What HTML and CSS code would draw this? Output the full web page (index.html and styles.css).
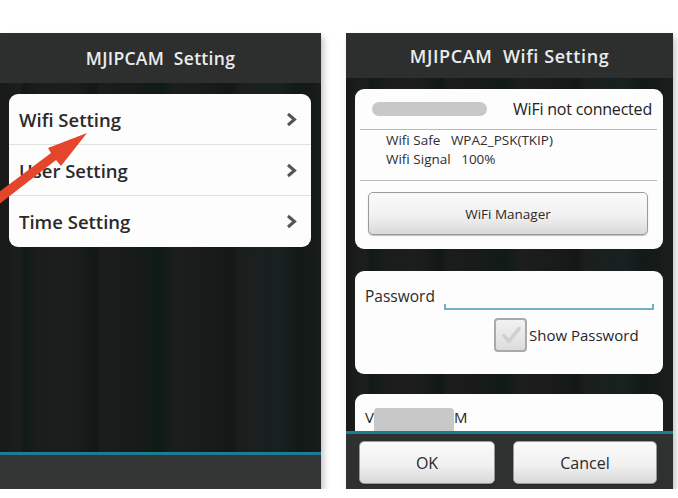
FILE: index.html
```html
<!DOCTYPE html>
<html lang="en">
<head>
    <meta charset="UTF-8">
    <title>MJIPCAM Setting</title>
    <link rel="stylesheet" href="styles.css">
</head>
<body>
    <div class="phone phone-left">
        <div class="titlebar">MJIPCAM&nbsp; Setting</div>
        <div class="screen">
            <ul class="menu">
                <li class="menu-item"><span>Wifi Setting</span>
                    <svg class="chev" width="11" height="15" viewBox="0 0 11 15"><path d="M2 2 L8.5 7.5 L2 13" fill="none" stroke="#555" stroke-width="3"/></svg>
                </li>
                <li class="menu-item"><span>User Setting</span>
                    <svg class="chev" width="11" height="15" viewBox="0 0 11 15"><path d="M2 2 L8.5 7.5 L2 13" fill="none" stroke="#555" stroke-width="3"/></svg>
                </li>
                <li class="menu-item"><span>Time Setting</span>
                    <svg class="chev" width="11" height="15" viewBox="0 0 11 15"><path d="M2 2 L8.5 7.5 L2 13" fill="none" stroke="#555" stroke-width="3"/></svg>
                </li>
            </ul>
        </div>
        <div class="navbar"></div>
        <!-- red pointer drawn over the menu -->
        <svg class="pointer" width="120" height="230" viewBox="0 0 120 230">
            <polygon points="87,133 61,166 56,160 -7,209 -13,201 51,153 48,148" fill="#e4452b"/>
        </svg>
    </div>

    <div class="phone phone-right">
        <div class="titlebar titlebar-sm">MJIPCAM&nbsp; Wifi Setting</div>
        <div class="screen screen-sm">
            <div class="card card-wifi">
                <div class="wifi-row">
                    <span class="blur blur-ssid"></span>
                    <span class="wifi-state">WiFi not connected</span>
                </div>
                <div class="divider"></div>
                <div class="wifi-info">
                    <p>Wifi Safe&nbsp;&nbsp; WPA2_PSK(TKIP)</p>
                    <p>Wifi Signal&nbsp;&nbsp; 100%</p>
                </div>
                <div class="divider"></div>
                <div class="btn-wrap">
                    <div class="btn">WiFi Manager</div>
                </div>
            </div>

            <div class="card card-pass">
                <div class="pass-row">
                    <span class="label">Password</span>
                    <span class="input"></span>
                </div>
                <div class="check-row">
                    <span class="checkbox">
                        <svg width="33" height="33" viewBox="0 0 33 33">
                            <path d="M8 17 L14 24 L26 9" fill="none" stroke="#d0d0d0" stroke-width="4" stroke-linecap="round" stroke-linejoin="round"/>
                        </svg>
                    </span>
                    <span class="check-text">Show Password</span>
                </div>
            </div>

            <div class="card card-name">
                <span>V</span><span class="blur blur-name"></span><span>M</span>
            </div>
        </div>
        <div class="footer">
            <div class="btn btn-ok">OK</div>
            <div class="btn btn-cancel">Cancel</div>
        </div>
    </div>
</body>
</html>
```

FILE: styles.css
```css
*{
    margin: 0;
    padding: 0;
    list-style: none;
    box-sizing: border-box;
}
body{
    background-color: #fff;
    display: flex;
    align-items: flex-start;
    gap: 25px;
    padding-top: 33px;
    font-family: "Open Sans", "Noto Sans", "DejaVu Sans", sans-serif;
    color: #262626;
}
.phone{
    position: relative;
    display: flex;
    flex-direction: column;
    height: 456px;
    background-color: #1b1d1d;
    box-shadow: 3px 4px 6px rgba(0,0,0,0.22);
}
.phone-left{
    width: 321px;
}
.phone-right{
    width: 327px;
}
.titlebar{
    height: 50px;
    background-color: #2d2f2f;
    color: #ececec;
    font-size: 17.5px;
    font-weight: 600;
    display: flex;
    align-items: center;
    justify-content: center;
    letter-spacing: 0.3px;
}
.titlebar-sm{
    height: 45px;
    font-size: 18px;
    letter-spacing: 0.6px;
}
.screen{
    flex: 1;
    overflow: hidden;
    padding: 11px 10px 0 9px;
    background-color: #1a1c1c;
    background-image: linear-gradient(90deg,
        #181a1a 0, #1c1e1e 20px, #111a16 24px, #1b1d1d 40px,
        #1c1e1e 70px, #121816 96px, #1b1d1d 100px, #191b1b 130px,
        #0f1b16 160px, #1c1e1e 175px, #1a1c1c 200px, #131816 232px,
        #1c1e1e 240px, #172120 280px, #121917 300px, #1c1e1e 330px);
}
.navbar{
    height: 37px;
    border-top: 3px solid #1b7d91;
    background-color: #343636;
}

/* left menu */
.menu{
    background-color: #fdfdfd;
    border-radius: 9px;
    overflow: hidden;
}
.menu-item{
    height: 51px;
    display: flex;
    align-items: center;
    justify-content: space-between;
    padding: 0 14px 0 10px;
    font-size: 18.5px;
    font-weight: 600;
    color: #2a2a2a;
    border-bottom: 1px solid #e0e0e0;
}
.menu-item:last-child{
    border-bottom: none;
}
.pointer{
    position: absolute;
    left: 0;
    top: -33px;
}

/* right screen */
.card{
    background-color: #fdfdfd;
    border-radius: 9px;
}
.card-wifi{
    height: 160px;
}
.wifi-row{
    height: 40px;
    display: flex;
    align-items: center;
    justify-content: space-between;
    padding: 0 11px 0 17px;
}
.blur{
    display: inline-block;
    background-color: #c8c8c8;
    border-radius: 7px;
}
.blur-ssid{
    width: 115px;
    height: 14px;
}
.wifi-state{
    font-size: 16px;
    letter-spacing: -0.2px;
    color: #222;
}
.divider{
    height: 1px;
    margin: 0 6px 0 5px;
    background-color: #b9b9b9;
}
.wifi-info{
    height: 50px;
    padding: 1px 0 0 31px;
    font-size: 13.5px;
    line-height: 19px;
    color: #2e2e2e;
}
.btn-wrap{
    padding: 11px 15px 0 13px;
}
.btn{
    height: 43px;
    border: 1px solid #9a9a9a;
    border-radius: 5px;
    background: linear-gradient(#fafafa, #f1f1f1 55%, #d9d9d9);
    display: flex;
    align-items: center;
    justify-content: center;
    font-size: 13.5px;
    color: #2a2a2a;
    box-shadow: 0 1px 1px rgba(0,0,0,0.25);
}
.card-pass{
    margin-top: 22px;
    height: 103px;
    padding: 12px 9px 0 10px;
}
.pass-row{
    display: flex;
    align-items: flex-end;
}
.label{
    font-size: 15.5px;
    line-height: 20px;
    margin-bottom: 4px;
    color: #2a2a2a;
}
.input{
    position: relative;
    flex: 1;
    height: 27px;
    margin-left: 9px;
    border-bottom: 2px solid #6fb1c0;
}
.input::before,
.input::after{
    content: "";
    position: absolute;
    bottom: 0;
    width: 2px;
    height: 4px;
    background-color: #6fb1c0;
}
.input::before{
    left: 0;
}
.input::after{
    right: 0;
}
.check-row{
    display: flex;
    align-items: center;
    margin-top: 8px;
    padding-left: 129px;
}
.checkbox{
    width: 33px;
    height: 34px;
    border: 2px solid #a9a9a9;
    border-radius: 4px;
    background: linear-gradient(#f2f2f2, #dcdcdc);
    display: flex;
    align-items: center;
    justify-content: center;
}
.checkbox svg{
    width: 28px;
    height: 28px;
}
.check-text{
    margin-left: 2px;
    font-size: 15px;
    color: #262626;
}
.card-name{
    margin-top: 20px;
    height: 60px;
    padding: 12px 0 0 10px;
    display: flex;
    align-items: flex-start;
    font-size: 15px;
    line-height: 22px;
}
.blur-name{
    width: 80px;
    height: 26px;
    margin-top: 2px;
    border-radius: 4px;
}
.footer{
    height: 58px;
    border-top: 3px solid #1b7d91;
    background-color: #2f3131;
    display: grid;
    grid-template-columns: 136px 144px;
    column-gap: 18px;
    padding: 7px 0 0 13px;
}
.footer .btn{
    font-size: 16px;
}
```
